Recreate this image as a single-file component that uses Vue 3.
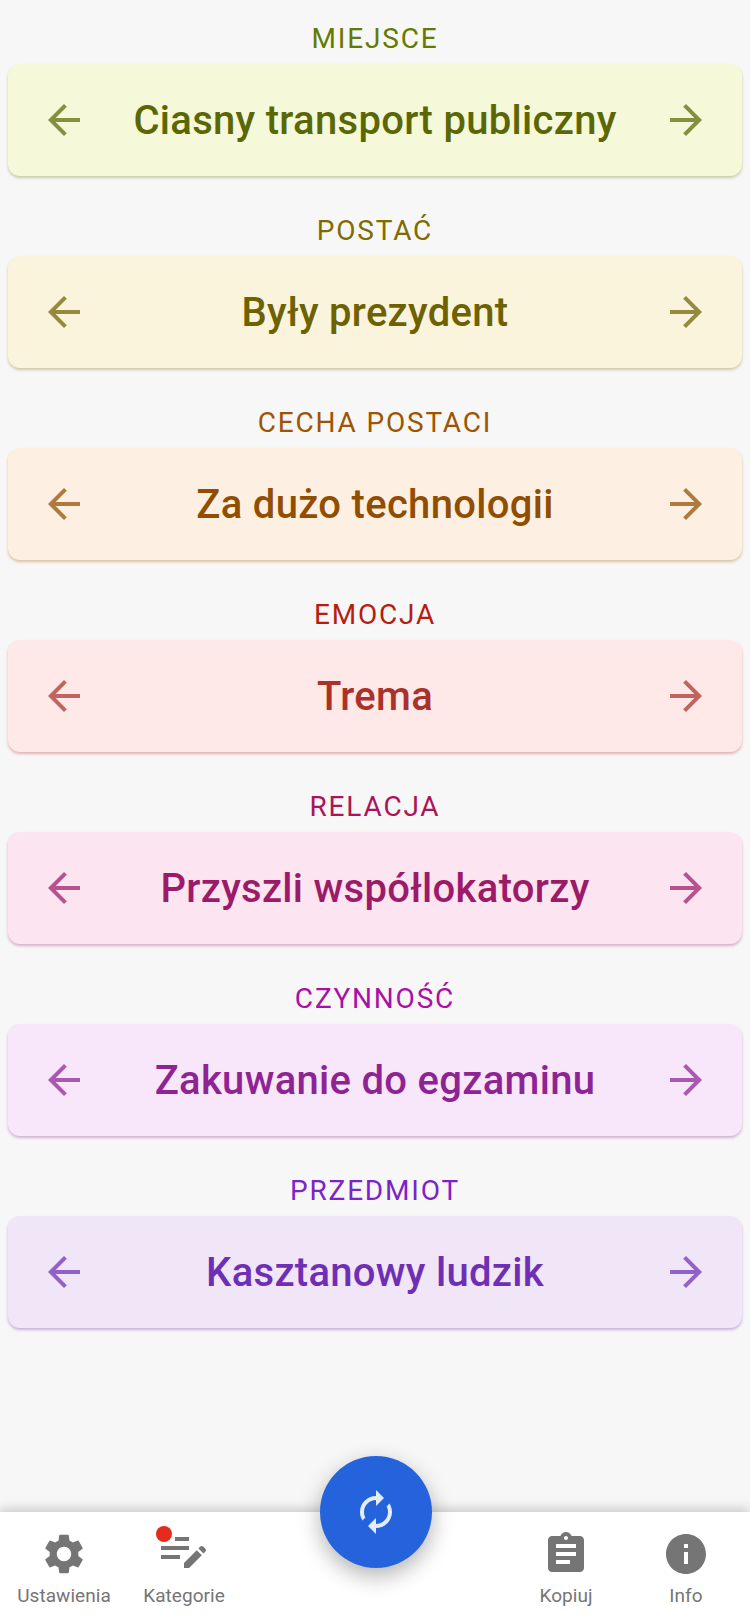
<script setup>
const rows = [
  { label: 'MIEJSCE', title: 'Ciasny transport publiczny', lc: '#667a00', tc: '#5b6705', bg: '#f5f9da', sh: '#c9cca8' },
  { label: 'POSTAĆ', title: 'Były prezydent', lc: '#7f6c00', tc: '#6d6100', bg: '#faf4dc', sh: '#cfc9a8' },
  { label: 'CECHA POSTACI', title: 'Za dużo technologii', lc: '#a05400', tc: '#924e00', bg: '#fdf0e2', sh: '#dcc2a4' },
  { label: 'EMOCJA', title: 'Trema', lc: '#b71c10', tc: '#a9322a', bg: '#fee9e8', sh: '#e2b4ae' },
  { label: 'RELACJA', title: 'Przyszli współlokatorzy', lc: '#ad1457', tc: '#9c1b69', bg: '#fce4f1', sh: '#d8b0c6' },
  { label: 'CZYNNOŚĆ', title: 'Zakuwanie do egzaminu', lc: '#ab0fa8', tc: '#8e2494', bg: '#f8e6fa', sh: '#d4b0d6' },
  { label: 'PRZEDMIOT', title: 'Kasztanowy ludzik', lc: '#7b24c9', tc: '#6f2fb5', bg: '#f0e6f8', sh: '#c8b0de' },
]
const back = 'M20 11H7.83l5.59-5.59L12 4l-8 8 8 8 1.41-1.41L7.83 13H20v-2z'
const fwd = 'M12 4l-1.41 1.41L16.17 11H4v2h12.17l-5.58 5.59L12 20l8-8z'
</script>

<template>
  <div class="page">
    <main class="list">
      <section v-for="r in rows" :key="r.label" class="row">
        <div class="label" :style="{ color: r.lc }">{{ r.label }}</div>
        <div class="card" :style="{ background: r.bg, boxShadow: `0 2px 3px ${r.sh}` }">
          <svg class="arrow" viewBox="0 0 24 24" :style="{ fill: r.tc }"><path :d="back" /></svg>
          <div class="title" :style="{ color: r.tc }">{{ r.title }}</div>
          <svg class="arrow" viewBox="0 0 24 24" :style="{ fill: r.tc }"><path :d="fwd" /></svg>
        </div>
      </section>
    </main>
    <nav class="bar">
      <div class="item">
        <svg class="icon" viewBox="0 0 24 24"><path d="M19.14 12.94c.04-.3.06-.61.06-.94 0-.32-.02-.64-.07-.94l2.03-1.58c.18-.14.23-.41.12-.61l-1.92-3.32c-.12-.22-.37-.29-.59-.22l-2.39.96c-.5-.38-1.03-.7-1.62-.94l-.36-2.54c-.04-.24-.24-.41-.48-.41h-3.84c-.24 0-.43.17-.47.41l-.36 2.54c-.59.24-1.13.57-1.62.94l-2.39-.96c-.22-.08-.47 0-.59.22L2.74 8.87c-.12.21-.08.47.12.61l2.03 1.58c-.05.3-.09.63-.09.94s.02.64.07.94l-2.03 1.58c-.18.14-.23.41-.12.61l1.92 3.32c.12.22.37.29.59.22l2.39-.96c.5.38 1.03.7 1.62.94l.36 2.54c.05.24.24.41.48.41h3.84c.24 0 .44-.17.47-.41l.36-2.54c.59-.24 1.13-.56 1.62-.94l2.39.96c.22.08.47 0 .59-.22l1.92-3.32c.12-.22.07-.47-.12-.61l-2.01-1.58zM12 15.6c-1.98 0-3.6-1.62-3.6-3.6s1.62-3.6 3.6-3.6 3.6 1.62 3.6 3.6-1.62 3.6-3.6 3.6z" /></svg>
        <span>Ustawienia</span>
      </div>
      <div class="item">
        <div class="icon-wrap">
          <svg class="icon" viewBox="0 0 24 24">
            <path d="M7.5 3.5h7v2h-7zM.5 8h14v2H.5zM.5 12.5H10v2H.5z" />
            <path transform="translate(-2.4 -6.2) scale(1.2)" d="M18.01 12.87l.71-.71c.39-.39 1.02-.39 1.41 0l.71.71c.39.39.39 1.02 0 1.41l-.71.71-2.12-2.12zm-.71.71-5.3 5.3V21h2.12l5.3-5.3-2.12-2.12z" />
          </svg>
          <i class="dot"></i>
        </div>
        <span>Kategorie</span>
      </div>
      <div class="gap"></div>
      <div class="item">
        <svg class="icon" viewBox="0 0 24 24"><path d="M19 3h-4.18C14.4 1.84 13.3 1 12 1c-1.3 0-2.4.84-2.82 2H5c-1.1 0-2 .9-2 2v14c0 1.1.9 2 2 2h14c1.1 0 2-.9 2-2V5c0-1.1-.9-2-2-2zm-7 0c.55 0 1 .45 1 1s-.45 1-1 1-1-.45-1-1 .45-1 1-1zm2 14H7v-2h7v2zm3-4H7v-2h10v2zm0-4H7V7h10v2z" /></svg>
        <span>Kopiuj</span>
      </div>
      <div class="item">
        <svg class="icon" viewBox="0 0 24 24"><path d="M12 2C6.48 2 2 6.48 2 12s4.48 10 10 10 10-4.48 10-10S17.52 2 12 2zm1 15h-2v-6h2v6zm0-8h-2V7h2v2z" /></svg>
        <span>Info</span>
      </div>
      <button class="fab">
        <svg class="sync" viewBox="0 0 24 24"><path transform="translate(24 0) scale(-1 1)" d="M12 4V1L8 5l4 4V6c3.31 0 6 2.69 6 6 0 1.01-.25 1.97-.7 2.8l1.46 1.46C19.54 15.03 20 13.57 20 12c0-4.42-3.58-8-8-8zm0 14c-3.31 0-6-2.69-6-6 0-1.01.25-1.97.7-2.8L5.24 7.74C4.46 8.97 4 10.43 4 12c0 4.42 3.58 8 8 8v3l4-4-4-4v3z" /></svg>
      </button>
    </nav>
  </div>
</template>

<style scoped>
.page {
  width: 750px;
  height: 1624px;
  background: #f7f7f7;
  display: flex;
  flex-direction: column;
  font-family: Roboto, sans-serif;
  overflow: hidden;
}
.list {
  flex: 1;
  display: flex;
  flex-direction: column;
  padding: 0 8px;
}
.row {
  height: 192px;
  display: flex;
  flex-direction: column;
}
.label {
  height: 64px;
  padding-top: 20px;
  box-sizing: border-box;
  line-height: 38px;
  text-align: center;
  font-size: 28px;
  letter-spacing: 1.8px;
}
.card {
  height: 112px;
  border-radius: 12px;
  display: flex;
  align-items: center;
  padding: 0 32px;
}
.arrow {
  width: 48px;
  height: 48px;
  flex: none;
  opacity: 0.72;
}
.title {
  flex: 1;
  text-align: center;
  font-size: 40px;
  font-weight: 500;
  letter-spacing: 0.3px;
}
.bar {
  position: relative;
  height: 112px;
  flex: none;
  background: #fff;
  box-shadow: 0 -2px 12px rgba(0, 0, 0, 0.22);
  display: flex;
  padding: 0 4px;
}
.item {
  width: 120px;
  display: flex;
  flex-direction: column;
  align-items: center;
  padding-top: 18px;
  color: #757575;
  font-size: 19px;
  letter-spacing: 0.05px;
}
.item span {
  margin-top: 4px;
  line-height: 28px;
}
.icon, .icon-wrap {
  width: 48px;
  height: 48px;
  fill: #757575;
}
.icon-wrap {
  position: relative;
}
.dot {
  position: absolute;
  left: -4px;
  top: -4px;
  width: 16px;
  height: 16px;
  border-radius: 50%;
  background: #e32c1e;
}
.gap {
  flex: 1;
}
.fab {
  position: absolute;
  left: 320px;
  top: -56px;
  width: 112px;
  height: 112px;
  border: none;
  padding: 0;
  border-radius: 50%;
  background: #2563dc;
  box-shadow: 0 8px 22px rgba(0, 0, 0, 0.3);
  display: flex;
  align-items: center;
  justify-content: center;
}
.sync {
  width: 48px;
  height: 48px;
  fill: #e3ecfb;
}
</style>
